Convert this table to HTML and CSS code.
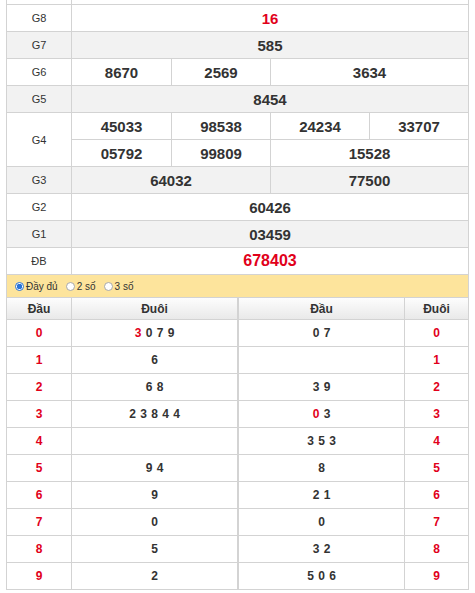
FILE: index.html
```html
<!DOCTYPE html>
<html lang="vi">
<head>
<meta charset="utf-8">
<title>Kết quả xổ số</title>
<link rel="stylesheet" href="styles.css">
</head>
<body>
<div class="board">
  <div class="prizes">
    <div class="cell lbl top"></div>
    <div class="cell span4 top"></div>

    <div class="cell lbl">G8</div>
    <div class="cell span4 num red">16</div>

    <div class="cell lbl alt">G7</div>
    <div class="cell span4 num alt">585</div>

    <div class="cell lbl">G6</div>
    <div class="cell num">8670</div>
    <div class="cell num">2569</div>
    <div class="cell span2 num">3634</div>

    <div class="cell lbl alt">G5</div>
    <div class="cell span4 num alt">8454</div>

    <div class="cell lbl rows2">G4</div>
    <div class="cell num">45033</div>
    <div class="cell num">98538</div>
    <div class="cell num">24234</div>
    <div class="cell num">33707</div>
    <div class="cell num">05792</div>
    <div class="cell num">99809</div>
    <div class="cell span2 num">15528</div>

    <div class="cell lbl alt">G3</div>
    <div class="cell span2 num alt">64032</div>
    <div class="cell span2 num alt">77500</div>

    <div class="cell lbl">G2</div>
    <div class="cell span4 num">60426</div>

    <div class="cell lbl alt">G1</div>
    <div class="cell span4 num alt">03459</div>

    <div class="cell lbl">ĐB</div>
    <div class="cell span4 num red big">678403</div>
  </div>

  <div class="options">
    <label class="opt"><span class="radio on"></span>Đầy đủ</label>
    <label class="opt"><span class="radio"></span>2 số</label>
    <label class="opt"><span class="radio"></span>3 số</label>
  </div>

  <div class="loto">
    <div class="cell head">Đầu</div>
    <div class="cell head sep">Đuôi</div>
    <div class="cell head">Đầu</div>
    <div class="cell head">Đuôi</div>

    <div class="cell key">0</div><div class="cell val sep"><span><span class="red">3</span> 0 7 9</span></div><div class="cell val"><span>0 7</span></div><div class="cell key">0</div>
    <div class="cell key">1</div><div class="cell val sep"><span>6</span></div><div class="cell val"></div><div class="cell key">1</div>
    <div class="cell key">2</div><div class="cell val sep"><span>6 8</span></div><div class="cell val"><span>3 9</span></div><div class="cell key">2</div>
    <div class="cell key">3</div><div class="cell val sep"><span>2 3 8 4 4</span></div><div class="cell val"><span><span class="red">0</span> 3</span></div><div class="cell key">3</div>
    <div class="cell key">4</div><div class="cell val sep"></div><div class="cell val"><span>3 5 3</span></div><div class="cell key">4</div>
    <div class="cell key">5</div><div class="cell val sep"><span>9 4</span></div><div class="cell val"><span>8</span></div><div class="cell key">5</div>
    <div class="cell key">6</div><div class="cell val sep"><span>9</span></div><div class="cell val"><span>2 1</span></div><div class="cell key">6</div>
    <div class="cell key">7</div><div class="cell val sep"><span>0</span></div><div class="cell val"><span>0</span></div><div class="cell key">7</div>
    <div class="cell key">8</div><div class="cell val sep"><span>5</span></div><div class="cell val"><span>3 2</span></div><div class="cell key">8</div>
    <div class="cell key">9</div><div class="cell val sep"><span>2</span></div><div class="cell val"><span>5 0 6</span></div><div class="cell key">9</div>
  </div>

  <p class="note">Xem kết quả xổ số hôm nay trực tiếp nhanh nhất, chính xác nhất tại đây.</p>
</div>
</body>
</html>
```

FILE: styles.css
```css
* {
  box-sizing: border-box;
}

html, body {
  margin: 0;
  padding: 0;
  background: #fff;
}

body {
  padding: 0 6px;
  font-family: "Liberation Sans", Arial, sans-serif;
  color: #333;
}

.board {
  width: 463px;
}

.prizes {
  display: grid;
  grid-template-columns: 64px 99px 98px 98px 98px;
  grid-template-rows: 4px;
  grid-auto-rows: 26px;
  gap: 1px;
  padding: 0 1px 1px 1px;
  background: #d3d3d3;
}

.cell {
  background: #fff;
  display: flex;
  align-items: center;
  justify-content: center;
  white-space: nowrap;
}

.alt {
  background: #f2f2f2;
}

.lbl {
  font-size: 11px;
  color: #333;
}

.rows2 {
  grid-row: span 2;
}

.span2 {
  grid-column: span 2;
}

.span4 {
  grid-column: span 4;
}

.num {
  font-size: 15px;
  font-weight: bold;
  color: #333;
}

.big {
  font-size: 16px;
}

.red {
  color: #e1001a;
}

.options {
  height: 22px;
  display: flex;
  align-items: center;
  gap: 8px;
  padding-left: 8px;
  background: #fde49c;
  border-left: 1px solid #d3d3d3;
  border-right: 1px solid #d3d3d3;
  font-size: 10px;
  color: #333;
}

.opt {
  display: flex;
  align-items: center;
  gap: 2px;
}

.radio {
  width: 9px;
  height: 9px;
  border-radius: 50%;
  border: 1px solid #a8a8a8;
  background: #fff;
}

.radio.on {
  border-color: #2a74d9;
  background: radial-gradient(circle, #2a74d9 0 2.6px, #fff 3px);
}

.loto {
  display: grid;
  grid-template-columns: 64px 166px 165px 63px;
  grid-template-rows: 21px;
  grid-auto-rows: 26px;
  gap: 1px;
  padding: 1px;
  background: #d3d3d3;
}

.sep {
  border-right: 1px solid #d3d3d3;
}

.head {
  background: linear-gradient(#fdfdfd, #e9e9e9);
  font-size: 12px;
  font-weight: bold;
  color: #333;
}

.key {
  font-size: 12px;
  font-weight: bold;
  color: #e1001a;
}

.val {
  font-size: 12px;
  font-weight: bold;
  color: #333;
  word-spacing: 1px;
}

.note {
  margin: 3px 0 0;
  font-size: 12px;
  line-height: 16px;
  color: #333;
  text-align: center;
}
```
